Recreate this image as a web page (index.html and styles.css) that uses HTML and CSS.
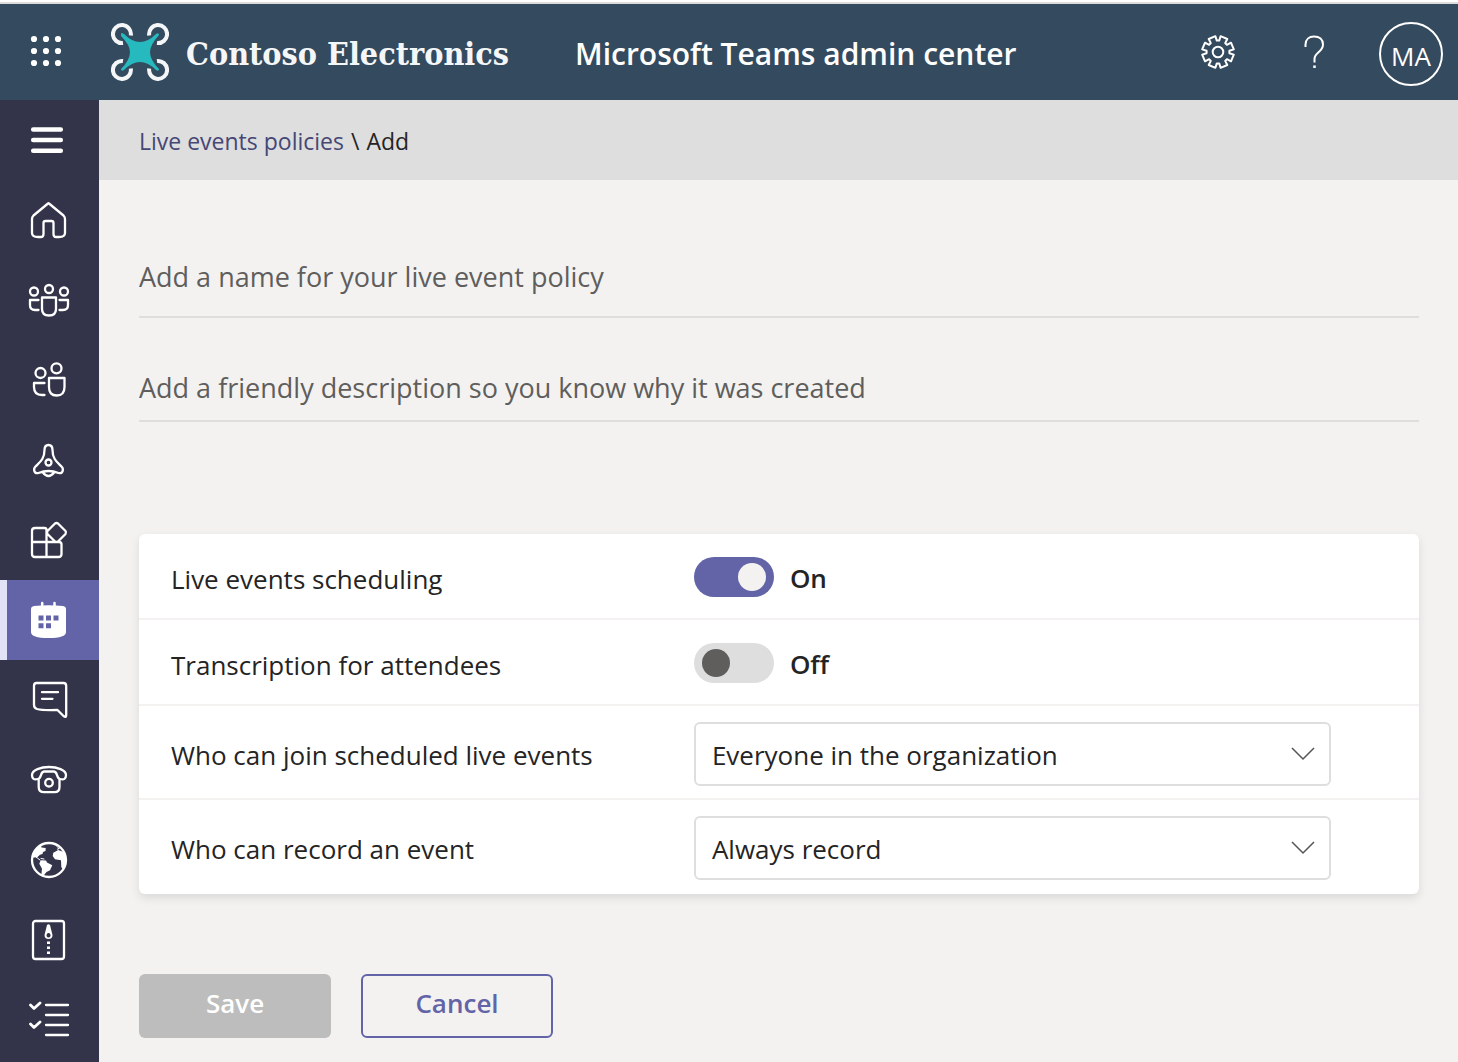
FILE: index.html
```html
<!DOCTYPE html>
<html lang="en">
<head>
<meta charset="utf-8">
<meta name="viewport" content="width=device-width, initial-scale=1">
<title>Live events policies - Microsoft Teams admin center</title>
<link rel="stylesheet" href="styles.css">
</head>
<body>
<header class="topbar">
  <button class="launcher" type="button" aria-label="App launcher">
    <svg width="32" height="32" viewBox="0 0 32 32" fill="#fff"><circle cx="4" cy="4" r="3.1"/><circle cx="16" cy="4" r="3.1"/><circle cx="28" cy="4" r="3.1"/><circle cx="4" cy="16" r="3.1"/><circle cx="16" cy="16" r="3.1"/><circle cx="28" cy="16" r="3.1"/><circle cx="4" cy="28" r="3.1"/><circle cx="16" cy="28" r="3.1"/><circle cx="28" cy="28" r="3.1"/></svg>
  </button>
  <a class="brand" href="#">
    <svg width="58" height="58" viewBox="0 0 58 58" fill="none" stroke="#f4f6f8" stroke-width="4">
      <path d="M19.800 12.500A9 9 0 1 0 12 20"/>
      <path d="M38.200 12.500A9 9 0 1 1 46 20"/>
      <path d="M19.800 45.500A9 9 0 1 1 12 38"/>
      <path d="M38.200 45.500A9 9 0 1 0 46 38"/>
      <path stroke="none" fill="#26b9be" d="M10 11Q10 9 13 11Q21 19 29 19Q37 19 45 11Q48 9 48 12Q39 22 39 29Q39 37 48 46Q48 49 45 47Q37 39 29 39Q21 39 13 47Q10 49 10 46Q19 37 19 29Q19 22 10 13Z"/>
    </svg>
    <span class="brand-name">Contoso Electronics</span>
  </a>
  <h1 class="title">Microsoft Teams admin center</h1>
  <div class="tools">
    <button class="tool" type="button" aria-label="Settings">
      <svg width="36" height="36" viewBox="0 0 36 36" fill="none" stroke="#fff" stroke-width="2" stroke-linejoin="round"><circle cx="18" cy="18" r="5.3"/><path d="M19.200 6.600L20.600 2.200 27.300 5 25.200 9.100 26.900 10.800 31 8.700 33.800 15.400 29.400 16.800V19.200L33.800 20.600 31 27.300 26.900 25.200 25.200 26.900 27.300 31 20.600 33.800 19.200 29.400H16.800L15.400 33.800 8.700 31 10.800 26.900 9.100 25.200 5 27.300 2.200 20.600 6.600 19.200V16.800L2.200 15.400 5 8.700 9.100 10.800 10.800 9.100 8.700 5 15.400 2.200 16.800 6.600Z"/></svg>
    </button>
    <button class="tool" type="button" aria-label="Help">
      <svg width="36" height="36" viewBox="0 0 36 36" fill="none" stroke="#fff" stroke-width="2"><path d="M9.500 13V10.500C9.500 5.500 13 2.500 18 2.500C23.500 2.500 27 5.500 27 10.500C27 18 18.500 18.500 18.500 25V28.500"/><path d="M17.200 32.700H19.800" stroke-width="2.500"/></svg>
    </button>
    <button class="avatar" type="button">MA</button>
  </div>
</header>
<div class="shell">
  <nav class="rail" aria-label="Main">
    <a class="item" href="#" aria-label="Menu"><svg class="icon" viewBox="0 0 44 44"><path stroke-width="4.500" d="M6.200 11.500H33.800M6.200 22H33.800M6.200 32.700H33.800"/></svg></a>
    <a class="item" href="#" aria-label="Home"><svg class="icon" viewBox="0 0 44 44"><path d="M21 5.500Q21.500 5 22 5.500L36.500 17.500Q38 19 38 21V35Q38 39 32 39H29Q26.500 39 26.500 36V25Q26.500 23 24.500 23H18.500Q16.500 23 16.500 25V36Q16.500 39 14 39H11Q5 39 5 35V21Q5 19 6.500 17.500Z"/></svg></a>
    <a class="item" href="#" aria-label="Teams"><svg class="icon" viewBox="0 0 44 44"><circle cx="7" cy="13.500" r="4"/><circle cx="22" cy="11" r="4"/><circle cx="37" cy="13.500" r="4"/><path d="M15 19.500H29V31Q29 37.500 22 37.500T15 31ZM11.500 22H3V27Q3 32 8 32H11.500M32.500 22H41V27Q41 32 36 32H32.500"/></svg></a>
    <a class="item" href="#" aria-label="Users"><svg class="icon" viewBox="0 0 44 44"><circle cx="13.500" cy="15" r="5"/><circle cx="29.500" cy="10.300" r="5"/><path d="M22 20H37.500V29Q37.500 37.500 29.700 37.500T22 29ZM17.500 25H7V29Q7 37 15 37H17.500"/></svg></a>
    <a class="item" href="#" aria-label="Alerts"><svg class="icon" viewBox="0 0 44 44"><circle cx="21.500" cy="24.500" r="3"/><path d="M21.500 7C18 7 17.500 10 17.500 12C17.500 21 13 24 8.500 28.500C6 31 7 36 11.500 35Q21.500 31 31.500 35C36 36 37 31 34.500 28.500C30 24 25.500 21 25.500 12C25.500 10 25 7 21.500 7ZM15.500 34Q21.500 42 27.500 34"/></svg></a>
    <a class="item" href="#" aria-label="Apps"><svg class="icon" viewBox="0 0 44 44"><path d="M19.500 39V12Q19.500 10 17.500 10H8Q5 10 5 13V36Q5 39 8 39H31.500Q34.500 39 34.500 36V26.500Q34.500 24 32 24H5M28 5.500Q29.500 4.500 31 5.500L38.500 13Q39.500 14.500 38.500 16L31 23.500Q29.500 24.500 28 23.500L20.500 16Q19.500 14.500 20.500 13Z"/></svg></a>
    <a class="item active" href="#" aria-label="Meetings" aria-current="page"><svg class="icon" viewBox="0 0 44 44"><path stroke-width="2.500" d="M15.200 5V10M27.500 5V10"/><path class="solid" d="M7 8Q21.500 6.500 36 8Q39 8.500 39 11V34Q39 40 21.500 40T4 34V11Q4 8.500 7 8Z"/><path fill="#6264a7" stroke="none" d="M11.500 17.500h5v5h-5zM19 17.500h5v5h-5zM26.500 17.500h5v5h-5zM11.500 25.300h5v5h-5zM19 25.300h5v5h-5z"/></svg></a>
    <a class="item" href="#" aria-label="Messaging"><svg class="icon" viewBox="0 0 44 44"><path d="M9.500 5H36.500Q39.200 5 39.200 8V37.500Q39.200 40 36.500 38L30.500 32Q15 32.500 10 31Q7 30 7 27V8Q7 5 9.500 5ZM15 14.200H31M15 20.800H25.500"/></svg></a>
    <a class="item" href="#" aria-label="Voice"><svg class="icon" viewBox="0 0 44 44"><circle cx="22" cy="24.700" r="3.800"/><path d="M5 17C5 12 14 9 22 9S39 12 39 17C39 21 37 22 33 21C29 20 31 14 27 13.500H17C13 14 15 20 11 21C7 22 5 21 5 17ZM11.700 22V29Q11.700 34.200 17 34.200H27.500Q32.500 34.200 32.500 29V22"/></svg></a>
    <a class="item" href="#" aria-label="Locations"><svg class="icon" viewBox="0 0 44 44"><circle cx="22" cy="22" r="17"/><path class="solid" d="M5 20L6 15 11.300 8 14 7.500 14.500 9.500 18.700 10 18.500 13 16 14 15.500 16 13 16.700 10.300 19.300 7 19.500ZM13.700 22.300L19 22.500 20 24.500 25.300 27.300 23 32.300 19.500 34 16.300 38 14.300 37.300 15 30.700 12.300 25.700ZM26.300 14.700L31.300 12 38 14.500 39.700 22.300 36.300 32.300 34.300 29 34 22.300 28 21.300 25.700 18ZM28 7L33 10.700 29.700 12 31 10Z"/><path stroke-width="1" d="M9 19L13 22M14 20.500L17 21"/></svg></a>
    <a class="item" href="#" aria-label="Org-wide settings"><svg class="icon" viewBox="0 0 44 44"><rect x="6" y="3" width="31" height="38" rx="2.500"/><path class="solid" fill-rule="evenodd" d="M20 7Q21.500 5.500 23 7L25.500 17Q25.500 21 21.500 21T17.500 17ZM21.500 15A2 2.300 0 1 0 21.600 15Z"/><path class="solid" d="M20 23.500h3v2.500h-3zM20 28.500h3v2.500h-3zM20 33.500h3v2.500h-3z"/></svg></a>
    <a class="item" href="#" aria-label="Planning"><svg class="icon" viewBox="0 0 44 44"><path stroke-width="2.800" d="M3.500 7L7 10.500L13 5M3.500 26L7 29.500L13 24"/><path d="M19 7H41M19 17H41M19 27H41M19 37H41"/></svg></a>
  </nav>
  <main class="content">
    <nav class="crumbs" aria-label="Breadcrumb"><a href="#">Live events policies</a><span>\</span><span>Add</span></nav>
    <form class="policy">
      <input class="field" type="text" aria-label="Policy name" placeholder="Add a name for your live event policy">
      <input class="field second" type="text" aria-label="Description" placeholder="Add a friendly description so you know why it was created">
      <div class="card">
        <div class="row">
          <label for="sched">Live events scheduling</label>
          <div class="control"><input class="switch" id="sched" type="checkbox" role="switch" checked><span class="state">On</span></div>
        </div>
        <div class="row">
          <label for="trans">Transcription for attendees</label>
          <div class="control"><input class="switch" id="trans" type="checkbox" role="switch"><span class="state">Off</span></div>
        </div>
        <div class="row tall">
          <label for="join">Who can join scheduled live events</label>
          <div class="pick"><select id="join"><option>Everyone in the organization</option></select><svg class="chevron" viewBox="0 0 24 14"><path d="M1 1L12 12L23 1"/></svg></div>
        </div>
        <div class="row tall">
          <label for="record">Who can record an event</label>
          <div class="pick"><select id="record"><option>Always record</option></select><svg class="chevron" viewBox="0 0 24 14"><path d="M1 1L12 12L23 1"/></svg></div>
        </div>
      </div>
      <div class="actions"><button class="btn save" type="submit" disabled>Save</button><button class="btn cancel" type="button">Cancel</button></div>
    </form>
  </main>
</div>
</body>
</html>
```
FILE: styles.css
```css
* { box-sizing: border-box; }
body {
  margin: 0;
  min-height: 100vh;
  display: flex;
  flex-direction: column;
  border-top: 2px solid #fff;
  background: #f3f2f1;
  color: #252424;
  font: 26px/36px "Open Sans", "Noto Sans", sans-serif;
}
button, input, select { font: inherit; color: inherit; margin: 0; }
button { padding: 0; border: 0; background: none; cursor: pointer; }
a { text-decoration: none; }
svg { display: block; }

.topbar {
  display: flex;
  align-items: center;
  height: 98px;
  border-top: 2px solid #dcdcdc;
  padding: 4px 15px 0 30px;
  background: #344a5e;
  color: #fff;
}
.launcher { margin: 0 49px 6px 0; }
.brand { display: flex; align-items: center; gap: 17px; padding-bottom: 4px; color: #f4f6f8; }
.brand-name { padding-top: 4px; font: bold 32px/40px "DejaVu Serif Condensed", "DejaVu Serif", serif; white-space: nowrap; }
.title { margin: 0 0 0 66px; font-size: 30px; line-height: 40px; font-weight: 600; white-space: nowrap; }
.tools { display: flex; align-items: center; margin-left: auto; gap: 60px; }
.tool { margin-bottom: 4px; }
.avatar { width: 64px; height: 64px; margin-left: -13px; border: 2px solid #fff; border-radius: 50%; font-size: 26px; padding-top: 4px; }

.shell { display: flex; flex: 1; }
.rail { flex: 0 0 99px; background: #33344a; }
.item { display: flex; align-items: center; height: 80px; padding-left: 27px; }
.item.active { background: #6264a7; border-left: 7px solid #e2e2f6; padding-left: 20px; }
.icon { width: 44px; height: 44px; fill: none; stroke: #fff; stroke-width: 2.3; stroke-linecap: round; stroke-linejoin: round; }
.icon .solid { fill: #fff; stroke: none; }

.content { flex: 1; min-width: 0; }
.crumbs { display: flex; align-items: center; gap: 7px; height: 80px; padding: 2px 40px 0; background: #dedede; font-size: 23px; }
.crumbs a { color: #464775; }
.policy { padding: 56px 39px 24px 40px; }
.field {
  display: block;
  width: 100%;
  height: 82px;
  padding: 0;
  border: 0;
  border-bottom: 2px solid #dedede;
  background: none;
  outline: none;
  font-size: 27px;
}
.field.second { height: 68px; margin-top: 36px; }
.field::placeholder { color: #605e5c; opacity: 1; }
.card { margin-top: 112px; background: #fff; border-radius: 6px; box-shadow: 0 4px 10px rgba(0, 0, 0, .1); }
.row { display: grid; grid-template-columns: 43% 1fr; align-items: center; height: 86px; padding: 2px 32px 0; border-bottom: 2px solid #f3f2f1; }
.row label { padding-top: 4px; }
.tall { height: 94px; padding-top: 4px; }
.tall label { padding-top: 2px; }
.row:last-child { border-bottom: 0; padding-top: 2px; }
.control { display: flex; align-items: center; gap: 16px; }
.state { font-weight: 600; padding-top: 2px; }
.switch { appearance: none; width: 80px; height: 40px; padding: 6px 8px; border-radius: 20px; background: #dedede; display: flex; }
.switch::before { content: ""; width: 28px; height: 28px; border-radius: 50%; background: #605e5c; }
.switch:checked { background: #6264a7; justify-content: flex-end; }
.switch:checked::before { background: #f3f2f1; }
.pick { display: grid; align-items: center; max-width: 637px; }
.pick > * { grid-area: 1 / 1; }
.pick select { appearance: none; width: 100%; height: 64px; padding: 2px 60px 0 16px; border: 2px solid #dedede; border-radius: 6px; background: #fff; }
.chevron { width: 24px; height: 14px; justify-self: end; margin-right: 16px; fill: none; stroke: #555; stroke-width: 1.5; pointer-events: none; }
.actions { display: flex; gap: 30px; margin-top: 80px; }
.btn { width: 192px; height: 64px; padding-bottom: 6px; border-radius: 6px; font-weight: 600; }
.save { background: #bdbdbd; color: #fff; }
.cancel { border: 2px solid #6264a7; color: #6264a7; }
```
